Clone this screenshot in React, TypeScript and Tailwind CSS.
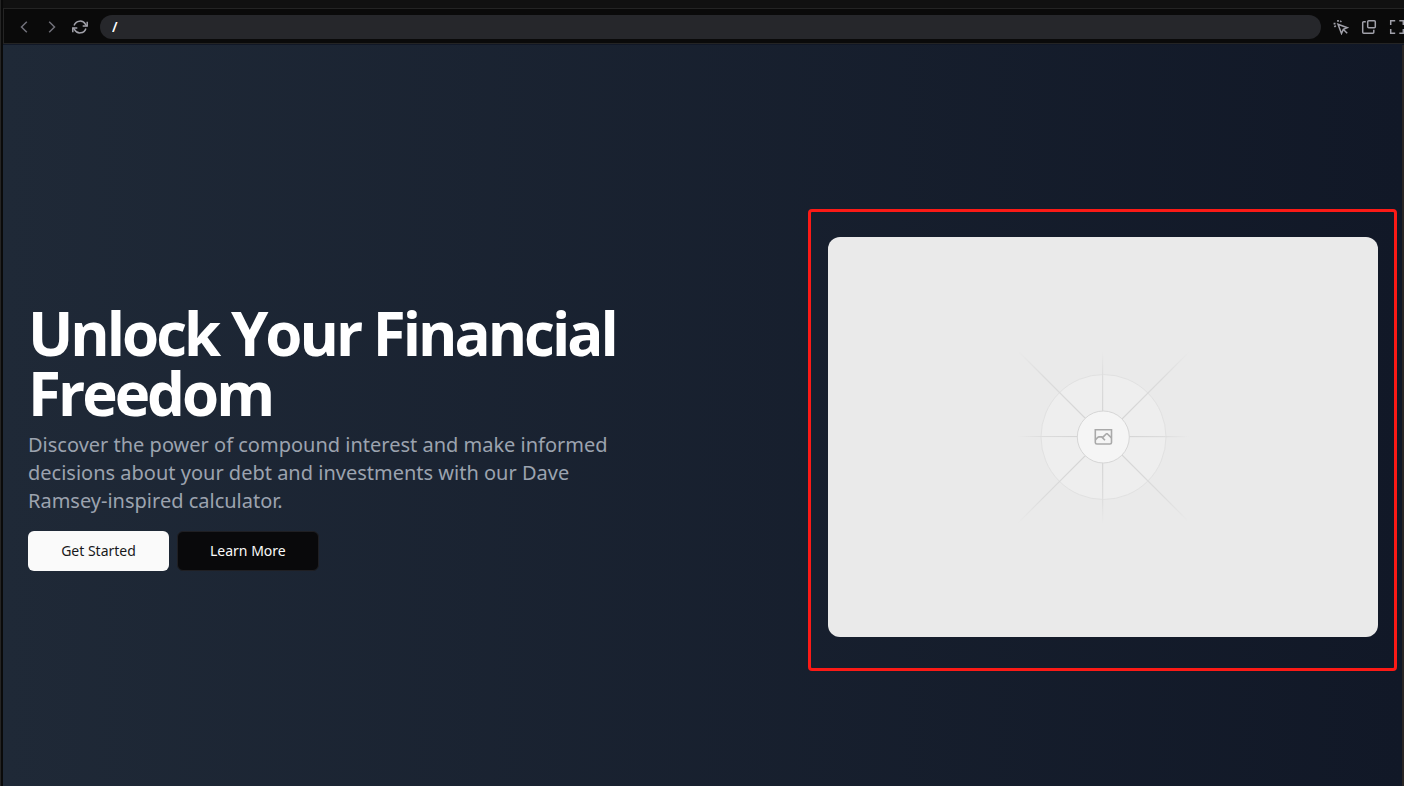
import React from "react";

type IconProps = { children: React.ReactNode };

function Icon({ children }: IconProps) {
  return (
    <svg
      viewBox="0 0 16 16"
      className="size-4 shrink-0"
      fill="none"
      stroke="currentColor"
      strokeWidth="1.5"
      aria-hidden="true"
    >
      {children}
    </svg>
  );
}

function ToolButton({ label, children }: { label: string; children: React.ReactNode }) {
  return (
    <button type="button" aria-label={label} className="flex size-4 shrink-0 items-center justify-center">
      <Icon>{children}</Icon>
    </button>
  );
}

function Toolbar() {
  return (
    <header className="flex h-9 items-center gap-3 overflow-hidden border-t border-b border-l border-[#242424] bg-[#0a0a0a] pt-px pl-3 text-[#a1a1aa]">
      <div className="flex shrink-0 gap-3 text-[#71717a]">
        <ToolButton label="Back">
          <path d="M10.8 2.7 5.5 8l5.3 5.3" />
        </ToolButton>
        <ToolButton label="Forward">
          <path d="M5.2 2.7 10.5 8l-5.3 5.3" />
        </ToolButton>
        <div className="flex text-[#a1a1aa]">
          <ToolButton label="Reload">
            <path d="M2.1 6.5A6.2 6.2 0 0 1 13.5 5.4l1.3 1.5M13.9 9.5A6.2 6.2 0 0 1 2.5 10.6L1.2 9.1" />
            <path d="M15.2 2.8v4.3h-4.5M.8 13.2V8.9h4.5" />
          </ToolButton>
        </div>
      </div>
      <input
        type="text"
        aria-label="Address"
        defaultValue="/"
        className="h-6 min-w-0 flex-1 rounded-full bg-[#26272b] px-3 text-sm font-semibold text-white outline-none"
      />
      <div className="-mr-px flex shrink-0 gap-3">
        <ToolButton label="Select element">
          <path d="m5 5.2 9.4 3.5-4.1 1.7-1.8 4.1L5 5.2ZM10.4 10.5l3.8 3.8" />
          <path d="M.6 4.6h1.9M5 .9v1.9M1.4 8l1.3-1.3M7.3 2.9l1-1" strokeWidth="1.7" />
        </ToolButton>
        <ToolButton label="Open in new window">
          <rect x="6.7" y="1.7" width="7.6" height="7.1" rx="1" />
          <path d="M4.8 2.7H2.7a1 1 0 0 0-1 1v9.6a1 1 0 0 0 1 1h9.1a1 1 0 0 0 1-1v-2.5" />
        </ToolButton>
        <ToolButton label="Full screen">
          <path d="M6.2 1.7H1.7v4.2M10.3 1.7h4v4.2M6.2 14.3H1.7v-4.2M10.3 14.3h4v-4.2" />
        </ToolButton>
      </div>
    </header>
  );
}

function Placeholder() {
  return (
    <svg viewBox="0 0 550 400" className="block w-full rounded-xl" role="img" aria-label="Placeholder">
      <defs>
        <radialGradient id="ray" gradientUnits="userSpaceOnUse" cx="275" cy="200" r="86">
          <stop offset="0.3" stopColor="#d5d5d5" />
          <stop offset="0.7" stopColor="#dcdcdc" />
          <stop offset="1" stopColor="#eaeaea" />
        </radialGradient>
        <radialGradient id="diagonal" gradientUnits="userSpaceOnUse" cx="275" cy="200" r="121">
          <stop offset="0.2" stopColor="#d5d5d5" />
          <stop offset="0.7" stopColor="#dcdcdc" />
          <stop offset="1" stopColor="#eaeaea" />
        </radialGradient>
      </defs>
      <rect width="550" height="400" fill="#eaeaea" />
      <circle cx="275.5" cy="200" r="62.5" fill="#eeeeee" stroke="#e1e1e1" />
      <g strokeWidth="1.2">
        <path d="M274.6 114 274.7 286M189 199.5 361 199.6" stroke="url(#ray)" />
        <path d="m189 113 172 172M189 287l173-173" stroke="url(#diagonal)" />
      </g>
      <circle cx="275.3" cy="200" r="26" fill="#f5f5f5" stroke="#d6d6d6" />
      <g fill="none" stroke="#a9a9a9" strokeWidth="1.6">
        <path d="M267.3 192.8h16.2v12.6a1.6 1.6 0 0 1-1.6 1.6h-13a1.6 1.6 0 0 1-1.6-1.6Z" />
        <path d="m267.3 203 2.4-2.5 1.2-.6h2.7l3.4 3.3M273.9 200.2l1.3-.3 3.2-3.2h.8l4.3 4.2" />
      </g>
    </svg>
  );
}

function Hero() {
  return (
    <main className="grid grid-cols-[minmax(0,1fr)_minmax(0,550px)] items-center gap-12 border-r-2 border-[#292524] bg-linear-to-r from-[#1f2937] to-[#111827] py-48 pr-6 pl-[25px]">
      <section className="flex flex-col">
        <h1 className="max-w-[620px] font-['Open_Sans','Noto_Sans',sans-serif] text-6xl leading-[60px] font-bold tracking-tighter text-white">
          Unlock Your Financial Freedom
        </h1>
        <p className="mt-2 max-w-[608px] text-xl leading-7 text-[#9ca3af]">
          Discover the power of compound interest and make informed decisions about your debt and investments with our Dave
          Ramsey-inspired calculator.
        </p>
        <div className="mt-4 flex gap-2 text-sm">
          <button type="button" className="h-10 min-w-[141px] rounded-md bg-[#fafafa] px-8 text-[#18181b]">
            Get Started
          </button>
          <button
            type="button"
            className="h-10 min-w-[141px] rounded-md border border-[#1f1f23] bg-[#09090b] px-8 text-[#fafafa]"
          >
            Learn More
          </button>
        </div>
      </section>
      <figure className="relative">
        <Placeholder />
        <div className="pointer-events-none absolute -top-7 -right-[19px] -bottom-[34px] -left-5 rounded-sm border-3 border-[#fb1a16]" />
      </figure>
    </main>
  );
}

export default function App() {
  return (
    <div className="h-screen overflow-hidden border-l border-[#242424] bg-[#0a0a0a] pl-0.5 font-['Noto_Sans','Open_Sans',sans-serif]">
      <div className="flex flex-col bg-[#111111] pt-2">
        <Toolbar />
        <div className="bg-[#111827] pt-px">
          <Hero />
        </div>
      </div>
    </div>
  );
}
